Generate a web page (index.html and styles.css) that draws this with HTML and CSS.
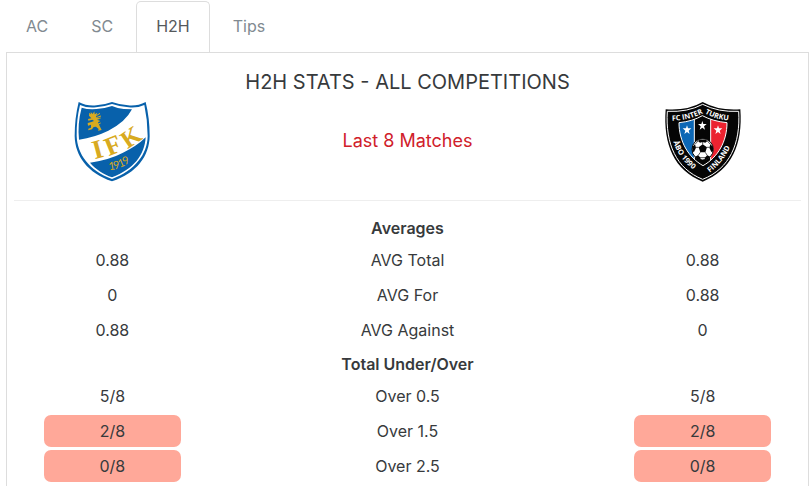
FILE: index.html
```html
<!DOCTYPE html>
<html lang="en">
<head>
  <meta charset="UTF-8">
  <meta name="viewport" content="width=device-width, initial-scale=1.0">
  <title>H2H Stats</title>
  <link rel="stylesheet" href="styles.css">
</head>
<body>

  <nav class="tabs">
    <a class="tab" href="#ac">AC</a>
    <a class="tab" href="#sc">SC</a>
    <a class="tab active" href="#h2h">H2H</a>
    <a class="tab" href="#tips">Tips</a>
  </nav>

  <main class="panel" id="h2h">
    <header class="match-header">
      <svg class="crest" viewBox="0 0 276 276" role="img" aria-label="IFK Mariehamn">
        <defs>
          <clipPath id="ifk-shield">
            <path d="M42 33Q64 43 90 40Q115 38 138 30Q162 38 188 40Q213 43 235 33Q245 79 245 126C244 181 207 229 138 255C69 229 34 181 32 126Q31 79 42 33Z"/>
          </clipPath>
        </defs>
        <path fill="#0861ab" d="M38 24Q63 37 91 34Q117 32 138 24Q160 32 186 34Q214 37 239 24Q251 72 251 126C250 186 213 237 138 262C65 237 27 186 26 126Q26 72 38 24Z"/>
        <path fill="#fff" d="M42 33Q64 43 90 40Q115 38 138 30Q162 38 188 40Q213 43 235 33Q245 79 245 126C244 181 207 229 138 255C69 229 34 181 32 126Q31 79 42 33Z"/>
        <g clip-path="url(#ifk-shield)">
          <path fill="#0861ab" d="M47 41Q67 47 91 45Q117 43 138 36Q155 43 173 45L198 46Q178 85 127 110Q86 130 39 137Q34 88 47 41Z"/>
          <path fill="#0861ab" d="M239 130C236 183 203 226 138 250C113 241 89 226 72 206Q131 197 171 176Q212 157 239 130Z"/>
        </g>
        <path fill="#d8aa20" d="M76 73L69 65L70 56L75 61L74 54L80 60L85 52L86 61L94 56L90 68L99 76L93 77L103 81L96 85L102 98L107 108L96 110L98 105L90 98L83 99L78 106L67 109L67 104L75 101L75 92L66 95L65 87L76 84L84 81L79 77L67 80L66 75Z"/>
        <path stroke="#d8aa20" stroke-width="3" fill="none" d="M91 65L102 58M93 70L105 66M94 74L104 72M96 91L104 87"/>
        <g fill="#d8aa20" font-family="Liberation Serif, serif" font-weight="bold" text-anchor="middle">
          <text font-size="80" transform="translate(101 192) rotate(-15)">I</text>
          <text font-size="78" transform="translate(150 178) rotate(-22)">F</text>
          <text font-size="74" transform="translate(208 150) rotate(-34)">K</text>
        </g>
        <g fill="#d8aa20" font-family="Lato, sans-serif" font-size="33" text-anchor="middle">
          <text transform="translate(139 227) rotate(-9)">1</text>
          <text transform="translate(154 224) rotate(-15)">9</text>
          <text transform="translate(170 218) rotate(-22)">1</text>
          <text transform="translate(185 209) rotate(-28)">9</text>
        </g>
      </svg>

      <div class="match-title">
        <h1>H2H STATS - ALL COMPETITIONS</h1>
        <p>Last 8 Matches</p>
      </div>

      <svg class="crest" viewBox="-3 0 276 276" role="img" aria-label="FC Inter Turku">
        <defs>
          <clipPath id="inter-shield">
            <path d="M63 86Q104 82 133 65Q165 82 207 86C207 142 180 190 135 215C91 190 63 142 63 86Z"/>
          </clipPath>
          <path id="inter-top-left" d="M42 80Q91 80 136 57"/>
          <path id="inter-top-right" d="M140 58Q178 80 229 80"/>
          <path id="inter-left" d="M46 143Q64 199 118 235"/>
          <path id="inter-right" d="M155 236Q204 199 224 139"/>
        </defs>
        <path fill="#050505" d="M23 46Q87 51 134 24Q183 51 247 46C255 152 220 230 134 263C49 230 15 152 23 46Z"/>
        <path fill="none" stroke="#fff" stroke-width="3" d="M28 52Q89 55 134 31Q181 55 242 52C248 149 215 224 134 256C54 224 22 149 28 52Z"/>
        <g clip-path="url(#inter-shield)">
          <path fill="#0c67b5" d="M54 75H108V220H54Z"/>
          <path fill="#050505" d="M108 60H158V220H108Z"/>
          <path fill="#eb2330" d="M158 75H218V220H158Z"/>
          <path fill="none" stroke="#fff" stroke-width="3" d="M109 60V220M158 60V220"/>
        </g>
        <path fill="none" stroke="#fff" stroke-width="3" d="M63 86Q104 82 133 65Q165 82 207 86C207 142 180 190 135 215C91 190 63 142 63 86Z"/>
        <g fill="#fff">
          <path id="inter-star" d="M133 81L136 90L146 90L138 97L141 107L133 101L125 107L128 97L120 90L130 90Z"/>
          <use href="#inter-star" x="-46" y="13"/>
          <use href="#inter-star" x="47" y="13"/>
        </g>
        <circle cx="134" cy="166" r="32" fill="#fff" stroke="#050505" stroke-width="3"/>
        <path fill="#050505" d="M122 160L134 151L147 160L142 175H127ZM119 140Q134 133 149 140L142 146L134 144L126 146ZM103 158L111 151L114 161L108 174L103 172ZM165 158L157 151L154 161L160 174L165 172ZM111 188L120 184L128 191L127 197Q117 196 111 188ZM157 188L148 184L140 191L141 197Q151 196 157 188Z"/>
        <path fill="none" stroke="#050505" stroke-width="2" d="M134 151V143M122 160L114 160M147 160L154 160M127 175L120 185M142 175L148 185M127 191H141M111 151L120 141M157 151L148 141"/>
        <g fill="#fff" font-family="Open Sans, sans-serif" font-weight="bold" font-size="22">
          <text><textPath href="#inter-top-left">FC INTER</textPath></text>
          <text><textPath href="#inter-top-right">TURKU</textPath></text>
          <text><textPath href="#inter-left">ÅBO 1990</textPath></text>
          <text><textPath href="#inter-right">FINLAND</textPath></text>
        </g>
      </svg>
    </header>

    <table class="stats">
      <colgroup>
        <col class="team">
        <col>
        <col class="team">
      </colgroup>
      <tbody>
        <tr class="group"><th colspan="3">Averages</th></tr>
        <tr><td>0.88</td><th>AVG Total</th><td>0.88</td></tr>
        <tr><td>0</td><th>AVG For</th><td>0.88</td></tr>
        <tr><td>0.88</td><th>AVG Against</th><td>0</td></tr>
      </tbody>
      <tbody>
        <tr class="group"><th colspan="3">Total Under/Over</th></tr>
        <tr><td>5/8</td><th>Over 0.5</th><td>5/8</td></tr>
        <tr><td><span class="low">2/8</span></td><th>Over 1.5</th><td><span class="low">2/8</span></td></tr>
        <tr><td><span class="low">0/8</span></td><th>Over 2.5</th><td><span class="low">0/8</span></td></tr>
      </tbody>
    </table>
  </main>

</body>
</html>
```
FILE: styles.css
```css
* {
  box-sizing: border-box;
}
body {
  margin: 0;
  padding: 1px 3px 0 6px;
  min-height: 100vh;
  display: flex;
  flex-direction: column;
  background: #fff;
  color: #373a3c;
  font-family: Inter, "Liberation Sans", sans-serif;
  font-size: 16px;
}
.tabs {
  display: flex;
  gap: 3px;
}
.tab {
  padding: 0 19px 2px;
  border: 1px solid transparent;
  border-bottom: 0;
  line-height: 48px;
  color: #818a91;
  text-decoration: none;
}
.tab.active {
  border-color: #ddd;
  border-radius: 5px 5px 0 0;
  margin-bottom: -1px;
  padding-bottom: 3px;
  background: #fff;
  color: #55595c;
}
.panel {
  flex: 1;
  padding: 0 7px;
  border: 1px solid #ddd;
  border-bottom: 0;
}
.match-header {
  display: grid;
  grid-template-columns: 1fr 2fr 1fr;
  justify-items: center;
  height: 148px;
  border-bottom: 1px solid #eee;
}
.crest {
  width: 92px;
  height: 92px;
  margin-top: 41px;
}
.match-title {
  text-align: center;
  white-space: nowrap;
}
.match-title h1 {
  margin: 17px 0 35px;
  font-size: 20px;
  font-weight: 400;
  line-height: 24px;
}
.match-title p {
  margin: 0;
  color: #d0202a;
  font-size: 18px;
  line-height: 24px;
}
.stats {
  width: 100%;
  margin-top: 11px;
  table-layout: fixed;
  border-collapse: collapse;
  text-align: center;
}
.team {
  width: 25%;
}
.stats th,
.stats td {
  height: 35px;
  padding: 1px 0 2px;
  font-weight: 400;
  line-height: 32px;
}
.stats .group th {
  height: 31px;
  padding: 2px 0 0;
  font-weight: 600;
  line-height: 29px;
}
.low {
  display: block;
  width: 70%;
  margin: 0 auto;
  border-radius: 7px;
  background: #ffa899;
}
```
